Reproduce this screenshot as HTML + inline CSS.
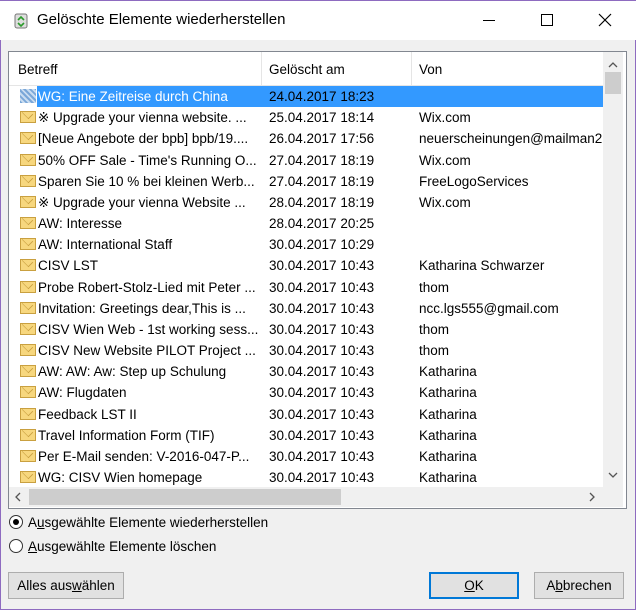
<!DOCTYPE html><html><head><meta charset="utf-8"><style>
*{margin:0;padding:0;box-sizing:border-box}
body{width:636px;height:610px;overflow:hidden;background:#f0f0f0;font-family:"Liberation Sans","DejaVu Sans",sans-serif;font-size:13.5px;color:#000;position:relative}
.win{position:absolute;left:0;top:0;width:636px;height:610px;border:1px solid #8e6bc0;border-top:none}
.title{position:absolute;left:0;top:0;width:636px;height:40px;background:#fff;border-top:1px solid #8e6bc0}
.title .t{position:absolute;left:37px;top:10px;font-size:15px}
.list{position:absolute;left:8px;top:51px;width:619px;height:458px;background:#fff;border:1px solid #828790}
.hdr{position:absolute;left:0;top:0;width:594px;height:34px;border-bottom:1px solid #e5e5e5}
.hdr span{position:absolute;top:10px}
.sep{position:absolute;top:0;width:1px;height:34px;background:#e5e5e5}
.row{position:absolute;left:0;width:594px;height:21px}
.row span{position:absolute;top:3px;white-space:nowrap}
.env{position:absolute;left:11px;top:4px;width:16px;height:12px;background:#f7d77e;border:1px solid #c9a040}
.env:after{content:"";position:absolute;left:1px;top:-4px;width:10px;height:10px;border-right:1px solid #c9a040;border-bottom:1px solid #c9a040;transform:rotate(45deg) scale(.85,.6)}
.sel{position:absolute;left:28px;top:0;width:566px;height:21px;background:#3399ff}
.vs{position:absolute;left:594px;top:0;width:20px;height:436px;background:#f0f0f0}
.hs{position:absolute;left:0;top:435px;width:614px;height:20px;background:#f0f0f0}
.btn{position:absolute;height:27px;background:#e1e1e1;border:1px solid #adadad;text-align:center;line-height:25px}
.radio{position:absolute;left:9px;width:14px;height:14px;border:1px solid #333;border-radius:50%;background:#fff}
u{text-decoration:underline}
</style></head><body>
<div class="win"></div>
<div class="title">
<svg style="position:absolute;left:12px;top:11px" width="18" height="18" viewBox="0 0 18 18"><rect x="3" y="2" width="12" height="14" rx="2" fill="#ddd" stroke="#777"/><path d="M6 8l3-3 3 3M6 11l3 3 3-3" stroke="#2a9a2a" stroke-width="1.6" fill="none"/></svg>
<div class="t">Gelöschte Elemente wiederherstellen</div>
<div style="position:absolute;left:483px;top:19px;width:12px;height:1px;background:#000"></div>
<div style="position:absolute;left:541px;top:13px;width:12px;height:12px;border:1px solid #000"></div>
<svg style="position:absolute;left:598px;top:12px" width="14" height="14"><path d="M1 1L13 13M13 1L1 13" stroke="#000" stroke-width="1.2"/></svg>
</div>
<div class="list">
<div class="hdr"><span style="left:9px">Betreff</span><div class="sep" style="left:252px"></div><span style="left:260px">Gelöscht am</span><div class="sep" style="left:402px"></div><span style="left:410px">Von</span></div>
<div id="rows"></div>
<div class="vs"><svg style="position:absolute;left:5px;top:10px" width="10" height="6"><path d="M1 5L5 1L9 5" stroke="#555" stroke-width="1.3" fill="none"/></svg><div style="position:absolute;left:2px;top:20px;width:16px;height:22px;background:#cdcdcd"></div><svg style="position:absolute;left:5px;top:420px" width="10" height="6"><path d="M1 1L5 5L9 1" stroke="#555" stroke-width="1.3" fill="none"/></svg></div>
<div class="hs"><svg style="position:absolute;left:6px;top:5px" width="6" height="10"><path d="M5 1L1 5L5 9" stroke="#555" stroke-width="1.3" fill="none"/></svg><div style="position:absolute;left:20px;top:2px;width:312px;height:16px;background:#cdcdcd"></div><svg style="position:absolute;left:580px;top:5px" width="6" height="10"><path d="M1 1L5 5L1 9" stroke="#555" stroke-width="1.3" fill="none"/></svg><div style="position:absolute;left:594px;top:0;width:20px;height:20px;background:#f0f0f0"></div></div>
</div>
<div class="radio" style="top:515px"><div style="position:absolute;left:3px;top:3px;width:6px;height:6px;border-radius:50%;background:#000"></div></div>
<div style="position:absolute;left:28px;top:515px">A<u>u</u>sgewählte Elemente wiederherstellen</div>
<div class="radio" style="top:539px"></div>
<div style="position:absolute;left:28px;top:539px"><u>A</u>usgewählte Elemente löschen</div>
<div class="btn" style="left:8px;top:572px;width:116px">Alles aus<u>w</u>ählen</div>
<div class="btn" style="left:429px;top:572px;width:90px;border:2px solid #0078d7;line-height:23px"><u>O</u>K</div>
<div class="btn" style="left:534px;top:572px;width:90px">A<u>b</u>brechen</div>
<script>
var d=[["WG: Eine Zeitreise durch China","24.04.2017 18:23",""],["※ Upgrade your vienna website. ...","25.04.2017 18:14","Wix.com"],["[Neue Angebote der bpb] bpb/19....","26.04.2017 17:56","neuerscheinungen@mailman2.l"],["50% OFF Sale - Time's Running O...","27.04.2017 18:19","Wix.com"],["Sparen Sie 10 % bei kleinen Werb...","27.04.2017 18:19","FreeLogoServices"],["※ Upgrade your vienna Website ...","28.04.2017 18:19","Wix.com"],["AW: Interesse","28.04.2017 20:25",""],["AW: International Staff","30.04.2017 10:29",""],["CISV LST","30.04.2017 10:43","Katharina Schwarzer"],["Probe Robert-Stolz-Lied mit Peter ...","30.04.2017 10:43","thom"],["Invitation: Greetings dear,This is ...","30.04.2017 10:43","ncc.lgs555@gmail.com"],["CISV Wien Web - 1st working sess...","30.04.2017 10:43","thom"],["CISV New Website PILOT Project ...","30.04.2017 10:43","thom"],["AW: AW: Aw: Step up Schulung","30.04.2017 10:43","Katharina"],["AW: Flugdaten","30.04.2017 10:43","Katharina"],["Feedback LST II","30.04.2017 10:43","Katharina"],["Travel Information Form (TIF)","30.04.2017 10:43","Katharina"],["Per E-Mail senden: V-2016-047-P...","30.04.2017 10:43","Katharina"],["WG: CISV Wien homepage","30.04.2017 10:43","Katharina"]];
var h="";d.forEach(function(r,i){var s=i==0;h+='<div class="row" style="top:'+Math.round(34+i*21.17)+'px">'+(s?'<div class="sel"></div><div style="position:absolute;left:11px;top:3px;width:16px;height:14px;background:repeating-linear-gradient(45deg,#7aa7d8 0 2px,#c9dcf0 2px 4px)"></div>':'<div class="env"></div>')+'<span style="left:29px;'+(s?'color:#fff':'')+'">'+r[0]+'</span><span style="left:260px">'+r[1]+'</span><span style="left:410px">'+r[2]+'</span></div>';});
document.getElementById("rows").innerHTML=h;
</script>
</body></html>
